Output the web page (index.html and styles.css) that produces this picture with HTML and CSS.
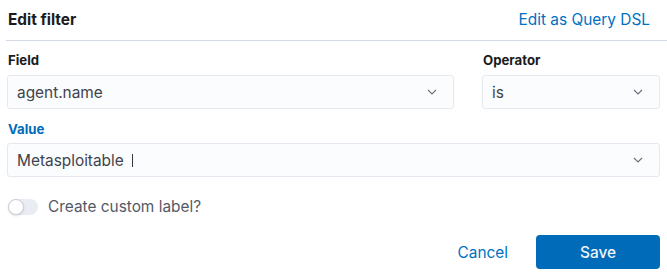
FILE: index.html
```html
<!DOCTYPE html>
<html>
<head>
<meta charset="utf-8">
<link rel="stylesheet" href="styles.css">
</head>
<body>
<div class="panel">
  <div class="header">
    <h2 class="title">Edit filter</h2>
    <a class="link">Edit as Query DSL</a>
  </div>
  <div class="body">
    <div class="row">
      <div class="col col-field">
        <label class="label">Field</label>
        <div class="input">
          <span class="val">agent.name</span>
          <svg class="chev" width="10" height="6" viewBox="0 0 10 6"><path d="M1 1l4 4 4-4" fill="none" stroke="#69707d" stroke-width="1.1"/></svg>
        </div>
      </div>
      <div class="col col-op">
        <label class="label">Operator</label>
        <div class="input">
          <span class="val">is</span>
          <svg class="chev" width="10" height="6" viewBox="0 0 10 6"><path d="M1 1l4 4 4-4" fill="none" stroke="#69707d" stroke-width="1.1"/></svg>
        </div>
      </div>
    </div>
    <div class="col col-value">
      <label class="label label-active">Value</label>
      <div class="input">
        <span class="val">Metasploitable <span class="caret"></span></span>
        <svg class="chev" width="10" height="6" viewBox="0 0 10 6"><path d="M1 1l4 4 4-4" fill="none" stroke="#69707d" stroke-width="1.1"/></svg>
      </div>
    </div>
    <div class="toggle-row">
      <span class="switch"><span class="knob"></span></span>
      <span class="toggle-label">Create custom label?</span>
    </div>
    <div class="footer">
      <a class="btn-empty">Cancel</a>
      <button class="btn-primary">Save</button>
    </div>
  </div>
</div>
</body>
</html>
```
FILE: styles.css
```css
* { box-sizing: border-box; }
html, body { margin: 0; padding: 0; background: #ffffff; }
body {
  font-family: Inter, "Noto Sans", sans-serif;
  color: #343741;
  width: 667px;
  height: 272px;
  overflow: hidden;
}
.panel { padding: 0 7px; }
.header {
  display: flex;
  align-items: center;
  justify-content: space-between;
  height: 41px;
  margin-left: -1px;
  margin-right: -7px;
  padding: 0 17px 0 2px;
  border-bottom: 1px solid #d3dae6;
}
.title {
  margin: 0;
  font-size: 15.4px;
  font-weight: 700;
  color: #1a1c21;
  line-height: 20px;
}
.link {
  font-size: 15.4px;
  color: #0071c2;
  line-height: 20px;
}
.body { padding-top: 10px; }
.row { display: flex; gap: 28px; }
.col-field { width: 447px; }
.col-op { width: 178px; }
.label {
  display: block;
  font-size: 13.2px;
  font-weight: 700;
  line-height: 18px;
  color: #1a1c21;
  padding-left: 1px;
  margin-bottom: 6px;
}
.label-active { color: #006bb8; }
.input {
  height: 34px;
  background: #fbfcfd;
  border: 1px solid #e4e8ef;
  border-radius: 3px;
  display: flex;
  align-items: center;
  justify-content: space-between;
  padding: 0 16px 0 9px;
  font-size: 15.4px;
  color: #3f434c;
}
.val { display: flex; align-items: center; white-space: pre; }
.caret {
  display: inline-block;
  width: 1px;
  height: 13px;
  background: #343741;
  margin-left: 4px;
}
.chev { display: block; }
.col-value { margin-top: 11px; }
.col-value .label { margin-bottom: 5px; }
.toggle-row {
  display: flex;
  align-items: center;
  gap: 10px;
  margin-top: 20px;
  padding-left: 1px;
}
.switch {
  width: 30px;
  height: 16px;
  border-radius: 8px;
  background: #e9edf3;
  position: relative;
  display: block;
}
.knob {
  position: absolute;
  left: 0;
  top: 0;
  width: 16px;
  height: 16px;
  border-radius: 50%;
  background: #ffffff;
  border: 1px solid #c9cfd8;
  box-shadow: 0 1px 2px rgba(0,0,0,0.12);
}
.toggle-label { font-size: 15.4px; color: #535966; line-height: 20px; }
.footer {
  display: flex;
  justify-content: flex-end;
  align-items: center;
  gap: 18px;
  margin-top: 18px;
}
.btn-empty {
  font-size: 15.4px;
  color: #0071c2;
  padding: 0 10px;
}
.btn-primary {
  width: 124px;
  height: 34px;
  border: none;
  border-radius: 4px;
  background: #006bb8;
  color: #eef4fa;
  font-family: Inter, "Noto Sans", sans-serif;
  font-size: 15.4px;
  font-weight: 500;
}
```
